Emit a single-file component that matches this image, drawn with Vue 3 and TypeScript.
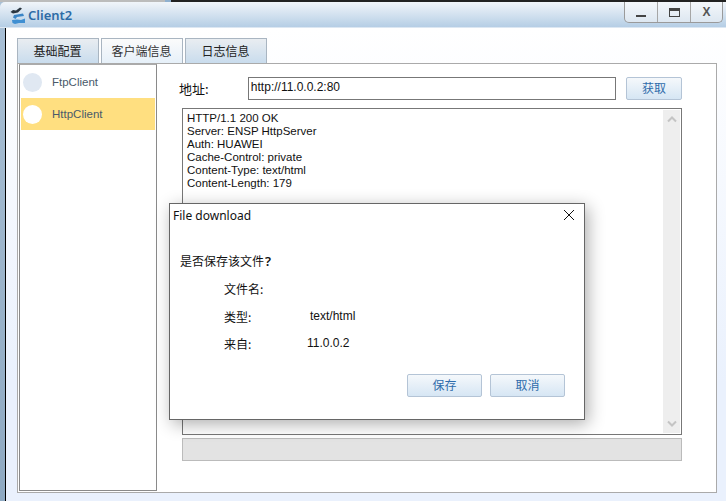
<script setup lang="ts">
const tabs = [
  { label: '基础配置', active: false },
  { label: '客户端信息', active: true },
  { label: '日志信息', active: false },
]
const clients = [
  { name: 'FtpClient', selected: false },
  { name: 'HttpClient', selected: true },
]
const responseLines = [
  'HTTP/1.1 200 OK',
  'Server: ENSP HttpServer',
  'Auth: HUAWEI',
  'Cache-Control: private',
  'Content-Type: text/html',
  'Content-Length: 179',
]
const fileRows = [
  { label: '文件名:', value: '', cls: '' },
  { label: '类型:', value: 'text/html', cls: 'v-type' },
  { label: '来自:', value: '11.0.0.2', cls: 'v-from' },
]
</script>

<template>
  <div class="screen">
    <div class="topline"><span class="tl-a"></span><span class="tl-c"></span><span class="tl-b"></span></div>
    <div class="window">
      <header class="titlebar">
        <svg class="logo" width="16" height="20" viewBox="0 0 16 20">
          <path d="M0.5 7 L3 5 L6 5.5 L10 2.5 L12 3.5 L8 7.5 L3 8.5 Z" fill="#2b3640" />
          <path d="M4 10 L13 8.5 L14 11 L7 12 L5.5 14 L3 12.5 Z" fill="#3b85c6" />
          <path d="M2 15 L7 14.5 L11 15 L15 13.5 L15 18 L9 18 L5 19 L2.5 18 Z" fill="#3f8fd2" />
        </svg>
        <span class="title">Client2</span>
        <div class="winbtns">
          <button class="wb"><span class="min"></span></button>
          <button class="wb"><span class="max"></span></button>
          <button class="wb x">X</button>
        </div>
      </header>
      <div class="body">
        <div class="tabs">
          <div v-for="t in tabs" :key="t.label" class="tab" :class="{ active: t.active }">{{ t.label }}</div>
        </div>
        <div class="panel">
          <aside class="list">
            <div v-for="c in clients" :key="c.name" class="item" :class="{ selected: c.selected }">
              <span class="dot"></span>
              <span class="name">{{ c.name }}</span>
            </div>
          </aside>
          <main class="content">
            <div class="addr">
              <label class="addr-label">地址:</label>
              <div class="input">http://11.0.0.2:80</div>
              <button class="btn get">获取</button>
            </div>
            <div class="output">
              <div class="text">
                <div v-for="l in responseLines" :key="l">{{ l }}</div>
              </div>
              <div class="scroll">
                <svg width="10" height="7" viewBox="0 0 10 7"><path d="M1 5.5 L5 1.5 L9 5.5" fill="none" stroke="#c4c4c4" stroke-width="2" /></svg>
                <svg width="10" height="7" viewBox="0 0 10 7"><path d="M1 1.5 L5 5.5 L9 1.5" fill="none" stroke="#c4c4c4" stroke-width="2" /></svg>
              </div>
            </div>
            <div class="progress"></div>
          </main>
        </div>
      </div>
    </div>

    <section class="dialog">
      <div class="d-head">
        <span>File download</span>
        <svg width="12" height="12" viewBox="0 0 12 12"><path d="M1 1 L11 11 M11 1 L1 11" stroke="#111" stroke-width="1" fill="none" /></svg>
      </div>
      <p class="question">是否保存该文件<span class="qm">?</span></p>
      <div class="rows">
        <div v-for="r in fileRows" :key="r.label" class="row">
          <span class="r-label">{{ r.label }}</span>
          <span class="r-value" :class="r.cls">{{ r.value }}</span>
        </div>
      </div>
      <div class="d-actions">
        <button class="btn act">保存</button>
        <button class="btn act">取消</button>
      </div>
    </section>
  </div>
</template>

<style>
html, body { margin: 0; padding: 0; background: #fff; }
</style>

<style scoped>
.screen {
  position: relative;
  width: 726px;
  height: 501px;
  overflow: hidden;
  font-family: "Liberation Sans", "Noto Sans CJK SC", sans-serif;
  color: #111;
  display: flex;
  flex-direction: column;
}
.topline { display: flex; height: 2px; flex: none; }
.tl-a { width: 165px; background: #bcbcbc; }
.tl-c { width: 6px; background: #8fb0cf; }
.tl-b { flex: 1; background: #222; }
.window {
  flex: 1;
  display: flex;
  flex-direction: column;
  min-height: 0;
  background: linear-gradient(#a9c0d6, #8ea9c2) left / 5px 100% no-repeat, #eaf1fd;
}
.titlebar {
  height: 26px;
  flex: none;
  display: flex;
  align-items: center;
  padding-left: 10px;
  background: linear-gradient(#f1f5fa, #b5cee5);
  border-top-left-radius: 5px;
  border-bottom: 1px solid #dce7f2;
  box-sizing: border-box;
}
.logo { margin-right: 2px; margin-top: 1px; }
.title {
  font-family: "Noto Sans", sans-serif;
  font-size: 13px;
  font-weight: 600;
  color: #2d6ba6;
}
.winbtns {
  margin-left: auto;
  margin-right: 3px;
  align-self: flex-start;
  display: flex;
  height: 21px;
  box-sizing: border-box;
  border: 1px solid #9a9a9a;
  border-top: 0;
  border-radius: 0 0 5px 5px;
  background: linear-gradient(#f4f7fb, #dde7f1);
}
.wb {
  width: 33px;
  border: 0;
  border-left: 1px solid #a6a6a6;
  background: none;
  padding: 0;
  display: flex;
  align-items: center;
  justify-content: center;
  font: 700 12px "Liberation Sans", sans-serif;
  color: #555;
}
.wb:first-child { border-left: 0; width: 32px; }
.wb:last-child { width: 32px; }
.min { width: 10px; height: 2px; background: #444; margin-top: 7px; }
.max { width: 9px; height: 5px; border: 1px solid #444; border-top-width: 3px; }
.body {
  flex: 1;
  min-height: 0;
  margin-left: 5px;
  border-left: 1px solid #000;
  padding: 10px 9px 8px 11px;
  background: linear-gradient(#fff, #eaf1fd 75%);
  display: flex;
  flex-direction: column;
}
.tabs { display: flex; gap: 2px; height: 25px; flex: none; }
.tab {
  width: 82px;
  box-sizing: border-box;
  border: 1px solid #a9b5c1;
  border-bottom: 0;
  padding-right: 1px;
  background: linear-gradient(#e9edf1, #c9dced);
  font-family: "Noto Sans CJK SC", sans-serif;
  font-size: 12px;
  line-height: 23px;
  text-align: center;
  color: #222;
}
.tab.active { background: linear-gradient(#fbfbfb, #e6f0f9); color: #333; }
.panel {
  flex: 1;
  min-height: 0;
  border: 1px solid #aaa;
  background: #fff;
  display: flex;
  padding: 0 0 1px 1px;
}
.list {
  width: 138px;
  box-sizing: border-box;
  border: 1px solid #8a8a8a;
  border-top-color: #aaa;
  padding: 1px;
  flex: none;
}
.item {
  height: 32px;
  display: flex;
  align-items: center;
  padding-left: 2px;
  font-size: 11.5px;
  color: #4a5a6a;
}
.item.selected { background: #ffdf80; }
.dot { width: 19px; height: 19px; border-radius: 50%; background: #e0e8f2; margin-right: 10px; }
.selected .dot { background: #fff; }
.content {
  flex: 1;
  min-width: 0;
  padding: 13px 34px 0 25px;
  display: flex;
  flex-direction: column;
}
.addr { display: flex; align-items: stretch; height: 23px; flex: none; }
.addr-label {
  width: 69px;
  margin-left: -3px;
  font-family: "Noto Sans CJK SC", sans-serif;
  font-size: 13px;
  line-height: 23px;
  color: #111;
}
.input {
  width: 369px;
  box-sizing: border-box;
  border: 1px solid #777;
  font-size: 12px;
  line-height: 19px;
  padding-left: 2px;
  margin-right: 10px;
}
.btn {
  box-sizing: border-box;
  border: 1px solid #b4c4d6;
  border-radius: 2px;
  background: linear-gradient(#f5f8fb, #d6e6f4);
  color: #2f6cab;
  font: 12px "Noto Sans CJK SC", sans-serif;
  padding: 0 0 2px;
}
.get { width: 56px; }
.output {
  margin-top: 8px;
  height: 327px;
  box-sizing: border-box;
  border: 1px solid #777;
  display: flex;
  flex: none;
}
.text {
  flex: 1;
  padding: 3px 4px;
  font-size: 11.5px;
  line-height: 13px;
}
.scroll {
  width: 17px;
  margin: 1px;
  background: #eee;
  display: flex;
  flex-direction: column;
  justify-content: space-between;
  align-items: center;
  padding: 6px 0;
  box-sizing: border-box;
}
.scroll svg { display: block; }
.progress {
  margin-top: 3px;
  height: 23px;
  flex: none;
  box-sizing: border-box;
  background: #e3e3e3;
  border: 1px solid #bbb;
}
.dialog {
  position: absolute;
  left: 169px;
  top: 203px;
  width: 416px;
  height: 217px;
  box-sizing: border-box;
  background: #fff;
  border: 1px solid #666;
  box-shadow: 3px 4px 16px rgba(0, 0, 0, 0.32);
  display: flex;
  flex-direction: column;
}
.d-head {
  display: flex;
  justify-content: space-between;
  align-items: center;
  height: 22px;
  padding: 0 9px 0 3px;
  font-family: "Noto Sans", sans-serif;
  font-size: 12px;
}
.question {
  margin: 25px 0 0 10px;
  font-family: "Noto Sans CJK SC", sans-serif;
  font-size: 12px;
  line-height: 20px;
}
.qm { font: 600 13px "Noto Sans", sans-serif; margin-left: 1px; }
.rows { margin-top: 4px; padding-left: 54px; }
.row { display: flex; height: 27.5px; font-size: 12px; line-height: 27px; }
.r-label { width: 80px; font-family: "Noto Sans CJK SC", sans-serif; }
.r-value { font-family: "Liberation Sans", sans-serif; }
.v-type { margin-left: 6px; }
.v-from { margin-left: 3px; }
.d-actions {
  margin-top: auto;
  padding: 0 19px 22px 0;
  display: flex;
  justify-content: flex-end;
  gap: 8px;
}
.act { width: 75px; height: 23px; }
</style>
